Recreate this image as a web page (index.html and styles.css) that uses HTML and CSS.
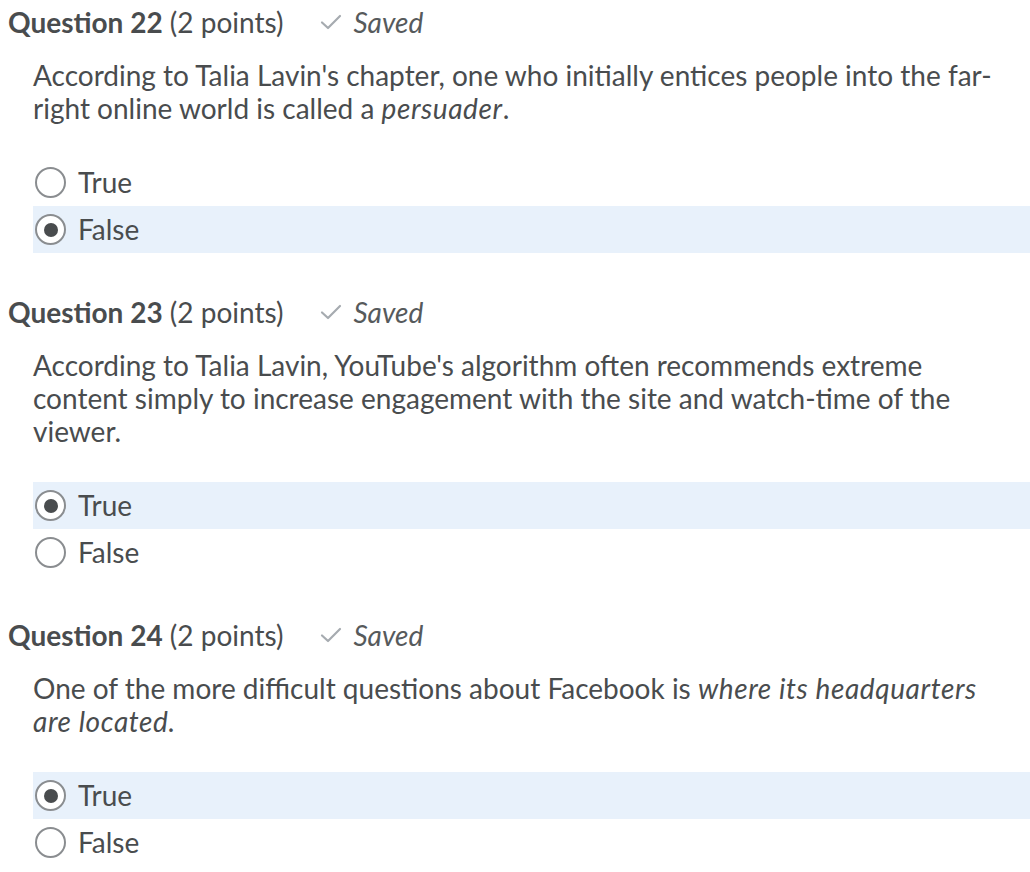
FILE: index.html
```html
<!DOCTYPE html>
<html lang="en">
<head>
<meta charset="utf-8">
<link rel="stylesheet" href="styles.css">
<title>Quiz</title>
</head>
<body>
<div class="quiz">
  <section class="question">
    <div class="qhead">
      <h2 class="qtitle"><strong>Question 22</strong> (2 points)</h2>
      <span class="saved"><svg class="check" viewBox="0 0 24 18" width="24" height="18"><path d="M3 9.5 L9 15 L21 3" fill="none" stroke="#a6abb0" stroke-width="2.2" stroke-linecap="round" stroke-linejoin="round"/></svg><em>Saved</em></span>
    </div>
    <p class="qtext">According to Talia Lavin's chapter, one who initially entices people into the far-right online world is called a <em>persuader</em>.</p>
    <div class="options">
      <label class="option"><span class="radio"></span>True</label>
      <label class="option selected"><span class="radio on"></span>False</label>
    </div>
  </section>
  <section class="question">
    <div class="qhead">
      <h2 class="qtitle"><strong>Question 23</strong> (2 points)</h2>
      <span class="saved"><svg class="check" viewBox="0 0 24 18" width="24" height="18"><path d="M3 9.5 L9 15 L21 3" fill="none" stroke="#a6abb0" stroke-width="2.2" stroke-linecap="round" stroke-linejoin="round"/></svg><em>Saved</em></span>
    </div>
    <p class="qtext">According to Talia Lavin, YouTube's algorithm often recommends extreme content simply to increase engagement with the site and watch-time of the viewer.</p>
    <div class="options">
      <label class="option selected"><span class="radio on"></span>True</label>
      <label class="option"><span class="radio"></span>False</label>
    </div>
  </section>
  <section class="question">
    <div class="qhead">
      <h2 class="qtitle"><strong>Question 24</strong> (2 points)</h2>
      <span class="saved"><svg class="check" viewBox="0 0 24 18" width="24" height="18"><path d="M3 9.5 L9 15 L21 3" fill="none" stroke="#a6abb0" stroke-width="2.2" stroke-linecap="round" stroke-linejoin="round"/></svg><em>Saved</em></span>
    </div>
    <p class="qtext">One of the more difficult questions about Facebook is <em>where its headquarters are located.</em></p>
    <div class="options">
      <label class="option selected"><span class="radio on"></span>True</label>
      <label class="option"><span class="radio"></span>False</label>
    </div>
  </section>
</div>
</body>
</html>
```

FILE: styles.css
```css
html, body {
  margin: 0;
  padding: 0;
  background: #ffffff;
}
body {
  font-family: Lato, "Open Sans", sans-serif;
  color: #494c4e;
  font-size: 28px;
  line-height: 33px;
}
.quiz {
  padding: 5px 0 0 8px;
}
.question {
  margin-bottom: 42px;
}
.qhead {
  display: flex;
  align-items: center;
  gap: 36px;
  height: 34px;
}
.qtitle {
  margin: 0;
  font-size: 28px;
  font-weight: 400;
  line-height: 34px;
}
.qtitle strong {
  font-weight: 700;
}
.saved {
  display: flex;
  align-items: center;
  gap: 10px;
  color: #565a5c;
}
.saved em {
  font-style: italic;
}
.check {
  display: block;
}
.qtext {
  margin: 20px 33px 34px 25px;
}
.qtext em {
  letter-spacing: 0.6px;
}
.options {
  margin-left: 25px;
}
.option {
  display: flex;
  align-items: center;
  gap: 12px;
  height: 47px;
  padding-left: 2px;
}
.option.selected {
  background: #e8f1fb;
}
.radio {
  box-sizing: border-box;
  width: 31px;
  height: 31px;
  border: 2.5px solid #8a8d90;
  border-radius: 50%;
  background: #fff;
  display: flex;
  align-items: center;
  justify-content: center;
  flex: none;
}
.radio.on::after {
  content: "";
  width: 14px;
  height: 14px;
  border-radius: 50%;
  background: #494c4e;
}
```
